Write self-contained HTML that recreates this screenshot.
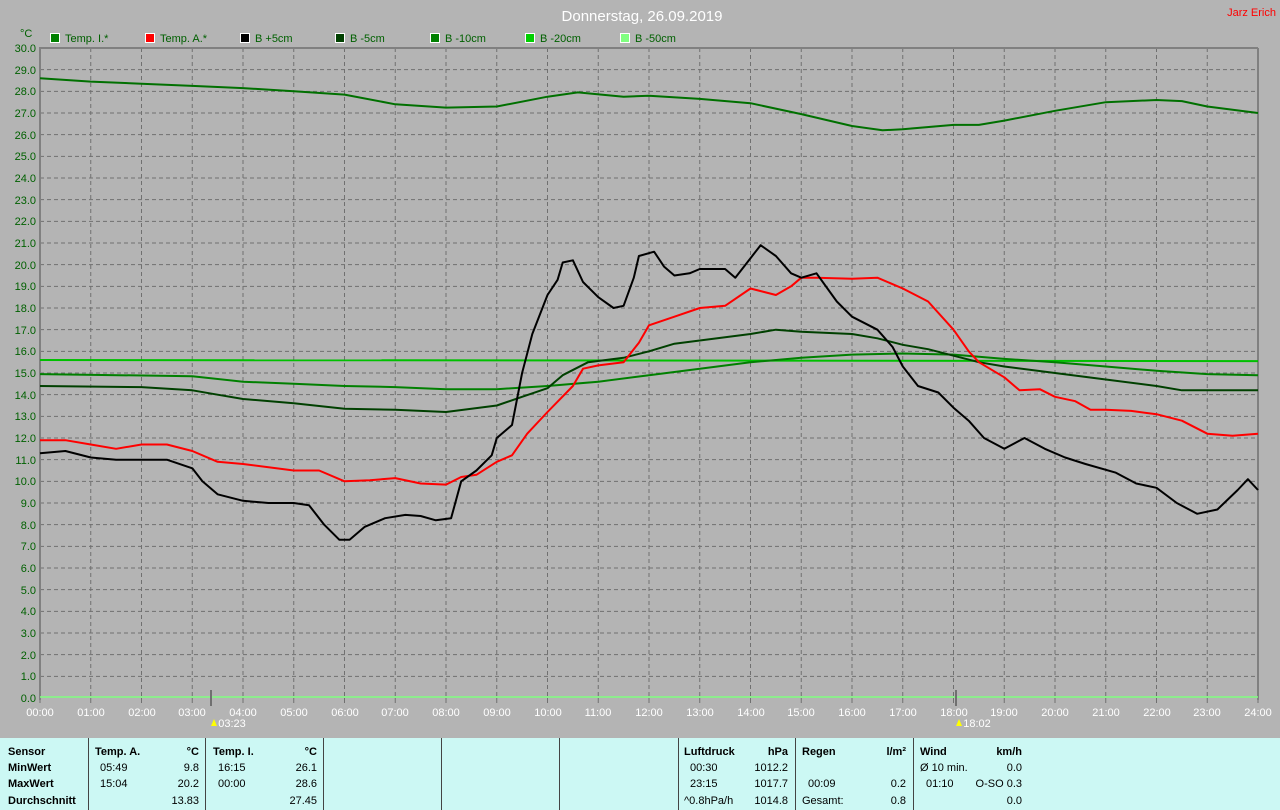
<!DOCTYPE html>
<html><head><meta charset="utf-8"><style>
body{margin:0;width:1280px;height:810px;overflow:hidden;background:#b4b4b4;font-family:"Liberation Sans",sans-serif}
svg{position:absolute;left:0;top:0}
</style></head><body>
<svg width="1280" height="810" id="s" xmlns="http://www.w3.org/2000/svg" font-family="Liberation Sans, sans-serif">
<rect x="0" y="0" width="1280" height="810" fill="#b4b4b4"/>
<g id="grid"></g>
<g id="lines" fill="none" stroke-width="2" stroke-linejoin="round"></g>
<text x="642" y="21" fill="#fff" font-size="15" text-anchor="middle">Donnerstag, 26.09.2019</text>
<text x="1276" y="16" fill="#f00" font-size="11" text-anchor="end">Jarz Erich</text>
<text x="20" y="37" fill="#006000" font-size="11">°C</text>
<g font-size="11" fill="#006000">
<rect x="50.5" y="33.5" width="9" height="9" fill="#008000" stroke="#fff"/><text x="65" y="42">Temp. I.*</text>
<rect x="145.5" y="33.5" width="9" height="9" fill="#f00" stroke="#fff"/><text x="160" y="42">Temp. A.*</text>
<rect x="240.5" y="33.5" width="9" height="9" fill="#000" stroke="#fff"/><text x="255" y="42">B +5cm</text>
<rect x="335.5" y="33.5" width="9" height="9" fill="#004000" stroke="#fff"/><text x="350" y="42">B -5cm</text>
<rect x="430.5" y="33.5" width="9" height="9" fill="#008000" stroke="#fff"/><text x="445" y="42">B -10cm</text>
<rect x="525.5" y="33.5" width="9" height="9" fill="#00d000" stroke="#fff"/><text x="540" y="42">B -20cm</text>
<rect x="620.5" y="33.5" width="9" height="9" fill="#80ff80" stroke="#fff"/><text x="635" y="42">B -50cm</text>
</g>
<g font-size="11" fill="#006000" text-anchor="end">
<text x="36" y="702">0.0</text><text x="36" y="680">1.0</text><text x="36" y="659">2.0</text><text x="36" y="637">3.0</text><text x="36" y="615">4.0</text><text x="36" y="594">5.0</text><text x="36" y="572">6.0</text><text x="36" y="550">7.0</text><text x="36" y="529">8.0</text><text x="36" y="507">9.0</text><text x="36" y="485">10.0</text><text x="36" y="464">11.0</text><text x="36" y="442">12.0</text><text x="36" y="420">13.0</text><text x="36" y="399">14.0</text><text x="36" y="377">15.0</text><text x="36" y="355">16.0</text><text x="36" y="334">17.0</text><text x="36" y="312">18.0</text><text x="36" y="290">19.0</text><text x="36" y="269">20.0</text><text x="36" y="247">21.0</text><text x="36" y="225">22.0</text><text x="36" y="204">23.0</text><text x="36" y="182">24.0</text><text x="36" y="160">25.0</text><text x="36" y="139">26.0</text><text x="36" y="117">27.0</text><text x="36" y="95">28.0</text><text x="36" y="74">29.0</text><text x="36" y="52">30.0</text>
</g>
<g font-size="11" fill="#fff" text-anchor="middle">
<text x="40" y="716">00:00</text><text x="91" y="716">01:00</text><text x="142" y="716">02:00</text><text x="192" y="716">03:00</text><text x="243" y="716">04:00</text><text x="294" y="716">05:00</text><text x="345" y="716">06:00</text><text x="395" y="716">07:00</text><text x="446" y="716">08:00</text><text x="497" y="716">09:00</text><text x="548" y="716">10:00</text><text x="598" y="716">11:00</text><text x="649" y="716">12:00</text><text x="700" y="716">13:00</text><text x="751" y="716">14:00</text><text x="801" y="716">15:00</text><text x="852" y="716">16:00</text><text x="903" y="716">17:00</text><text x="954" y="716">18:00</text><text x="1004" y="716">19:00</text><text x="1055" y="716">20:00</text><text x="1106" y="716">21:00</text><text x="1157" y="716">22:00</text><text x="1207" y="716">23:00</text><text x="1258" y="716">24:00</text>
<text x="232" y="727">03:23</text><text x="977" y="727">18:02</text>
</g>
<rect x="210" y="690" width="2" height="16" fill="#707070"/><rect x="955" y="690" width="2" height="16" fill="#707070"/>
<path d="M211 726 l3 -7 l3 7z" fill="#ff0"/><path d="M956 726 l3 -7 l3 7z" fill="#ff0"/>
<rect x="0" y="738" width="1280" height="72" fill="#ccf8f4"/>
<g stroke="#444" stroke-width="1">
<line x1="88.5" y1="738" x2="88.5" y2="810"/><line x1="205.5" y1="738" x2="205.5" y2="810"/><line x1="323.5" y1="738" x2="323.5" y2="810"/><line x1="441.5" y1="738" x2="441.5" y2="810"/><line x1="559.5" y1="738" x2="559.5" y2="810"/><line x1="678.5" y1="738" x2="678.5" y2="810"/><line x1="795.5" y1="738" x2="795.5" y2="810"/><line x1="913.5" y1="738" x2="913.5" y2="810"/>
</g>
<g font-size="11" fill="#000">
<g font-weight="bold"><text x="8" y="755">Sensor</text><text x="8" y="771">MinWert</text><text x="8" y="787">MaxWert</text><text x="8" y="804">Durchschnitt</text>
<text x="95" y="755">Temp. A.</text><text x="199" y="755" text-anchor="end">°C</text>
<text x="213" y="755">Temp. I.</text><text x="317" y="755" text-anchor="end">°C</text>
<text x="684" y="755">Luftdruck</text><text x="788" y="755" text-anchor="end">hPa</text>
<text x="802" y="755">Regen</text><text x="906" y="755" text-anchor="end">l/m²</text>
<text x="920" y="755">Wind</text><text x="1022" y="755" text-anchor="end">km/h</text></g>
<text x="100" y="771">05:49</text><text x="100" y="787">15:04</text>
<g text-anchor="end"><text x="199" y="771">9.8</text><text x="199" y="787">20.2</text><text x="199" y="804">13.83</text>
<text x="317" y="771">26.1</text><text x="317" y="787">28.6</text><text x="317" y="804">27.45</text>
<text x="788" y="771">1012.2</text><text x="788" y="787">1017.7</text><text x="788" y="804">1014.8</text>
<text x="906" y="787">0.2</text><text x="906" y="804">0.8</text>
<text x="1022" y="771">0.0</text><text x="1022" y="787">O-SO 0.3</text><text x="1022" y="804">0.0</text></g>
<text x="218" y="771">16:15</text><text x="218" y="787">00:00</text>
<text x="690" y="771">00:30</text><text x="690" y="787">23:15</text><text x="684" y="804">^0.8hPa/h</text>
<text x="808" y="787">00:09</text><text x="802" y="804">Gesamt:</text>
<text x="920" y="771">Ø 10 min.</text><text x="926" y="787">01:10</text>
</g>
</svg>
<script>
var X=h=>40+h*50.75,Y=v=>698-v*21.6667,NS="http://www.w3.org/2000/svg";
var g=document.getElementById('grid'),L=document.getElementById('lines');
function el(p,t,a){var e=document.createElementNS(NS,t);for(var k in a)e.setAttribute(k,a[k]);p.appendChild(e);return e}
for(var h=1;h<=24;h++)el(g,'line',{x1:X(h),x2:X(h),y1:48,y2:698,stroke:'#707070','stroke-dasharray':'4,3'});
for(var v=1;v<30;v++)el(g,'line',{x1:40,x2:1258,y1:Y(v),y2:Y(v),stroke:'#707070','stroke-dasharray':'4,3'});
for(var h=0;h<=24;h++)el(g,'line',{x1:X(h),x2:X(h),y1:698,y2:703,stroke:'#707070'});
el(g,'line',{x1:39,x2:1258,y1:48,y2:48,stroke:'#808080','stroke-width':2});
el(g,'line',{x1:40,x2:40,y1:48,y2:700,stroke:'#808080','stroke-width':2});
el(g,'line',{x1:1258,x2:1258,y1:48,y2:700,stroke:'#808080','stroke-width':2});
el(g,'line',{x1:40,x2:1258,y1:697,y2:697,stroke:'#80ff80','stroke-width':1.5});
function line(c,a){var d='';for(var i=0;i<a.length;i+=2)d+=(i?'L':'M')+X(a[i]).toFixed(1)+' '+Y(a[i+1]).toFixed(1);el(L,'path',{d:d,stroke:c})}
line('#00c000',[0,15.6,24,15.55]);
line('#008000',[0,14.95,3,14.85,4,14.6,5,14.5,6,14.4,7,14.35,8,14.25,9,14.25,10,14.4,11,14.6,12,14.9,13,15.2,14,15.5,15,15.7,16,15.85,17,15.9,18,15.85,19,15.65,20,15.5,21,15.3,22,15.1,23,14.95,24,14.9]);
line('#004000',[0,14.4,2,14.35,3,14.2,3.5,14.0,4,13.8,5,13.6,6,13.35,7,13.3,8,13.2,9,13.5,9.5,13.9,10,14.3,10.3,14.9,10.8,15.5,11.5,15.7,12,16.0,12.5,16.35,13,16.5,14,16.8,14.5,17.0,15,16.9,16,16.8,16.5,16.6,17,16.3,17.5,16.1,18,15.8,18.5,15.5,19,15.3,20,15.0,21,14.7,22,14.4,22.5,14.2,24,14.2]);
line('#007000',[0,28.6,1,28.45,2,28.35,3,28.25,4,28.15,5,28.0,6,27.85,7,27.4,8,27.25,9,27.3,10,27.75,10.6,27.95,11.5,27.75,12,27.8,13,27.65,14,27.45,15,26.95,16,26.4,16.6,26.2,17,26.25,18,26.45,18.5,26.45,19,26.65,20,27.1,21,27.5,22,27.6,22.5,27.55,23,27.3,24,27.0]);
line('#ff0000',[0,11.9,0.5,11.9,1,11.7,1.5,11.5,2,11.7,2.5,11.7,3,11.4,3.5,10.9,4,10.8,5,10.5,5.5,10.5,6,10.0,6.5,10.05,7,10.15,7.5,9.9,8,9.85,8.3,10.2,8.6,10.3,9,10.9,9.3,11.2,9.6,12.2,10,13.2,10.5,14.4,10.7,15.2,11,15.35,11.5,15.5,11.8,16.4,12,17.2,12.5,17.6,13,18.0,13.5,18.1,14,18.9,14.5,18.6,14.8,19.0,15.0,19.4,15.3,19.4,16,19.35,16.5,19.4,17,18.9,17.5,18.3,18,17.0,18.3,16.0,18.5,15.5,19,14.8,19.3,14.2,19.7,14.25,20,13.9,20.4,13.7,20.7,13.3,21,13.3,21.5,13.25,22,13.1,22.5,12.8,23,12.2,23.5,12.1,24,12.2]);
line('#000000',[0,11.3,0.5,11.4,1,11.1,1.5,11.0,2,11.0,2.5,11.0,3,10.6,3.2,10.0,3.5,9.4,4,9.1,4.5,9.0,5,9.0,5.3,8.9,5.6,8.0,5.9,7.3,6.1,7.3,6.4,7.9,6.8,8.3,7.2,8.45,7.5,8.4,7.8,8.2,8.1,8.3,8.3,10.0,8.6,10.5,8.9,11.2,9.0,12.0,9.3,12.6,9.5,15.0,9.7,16.8,10.0,18.6,10.2,19.3,10.3,20.1,10.5,20.2,10.7,19.2,11,18.5,11.3,18.0,11.5,18.1,11.7,19.4,11.8,20.4,12.1,20.6,12.3,19.9,12.5,19.5,12.8,19.6,13,19.8,13.5,19.8,13.7,19.4,14,20.3,14.2,20.9,14.5,20.4,14.8,19.6,15,19.4,15.3,19.6,15.7,18.3,16,17.6,16.5,17.0,16.8,16.2,17,15.3,17.3,14.4,17.7,14.1,18,13.4,18.3,12.8,18.6,12.0,19,11.5,19.4,12.0,19.8,11.5,20.2,11.1,20.6,10.8,21.2,10.4,21.6,9.9,22,9.7,22.4,9.0,22.8,8.5,23.2,8.7,23.6,9.6,23.8,10.1,24,9.6]);
</script>
</body></html>
